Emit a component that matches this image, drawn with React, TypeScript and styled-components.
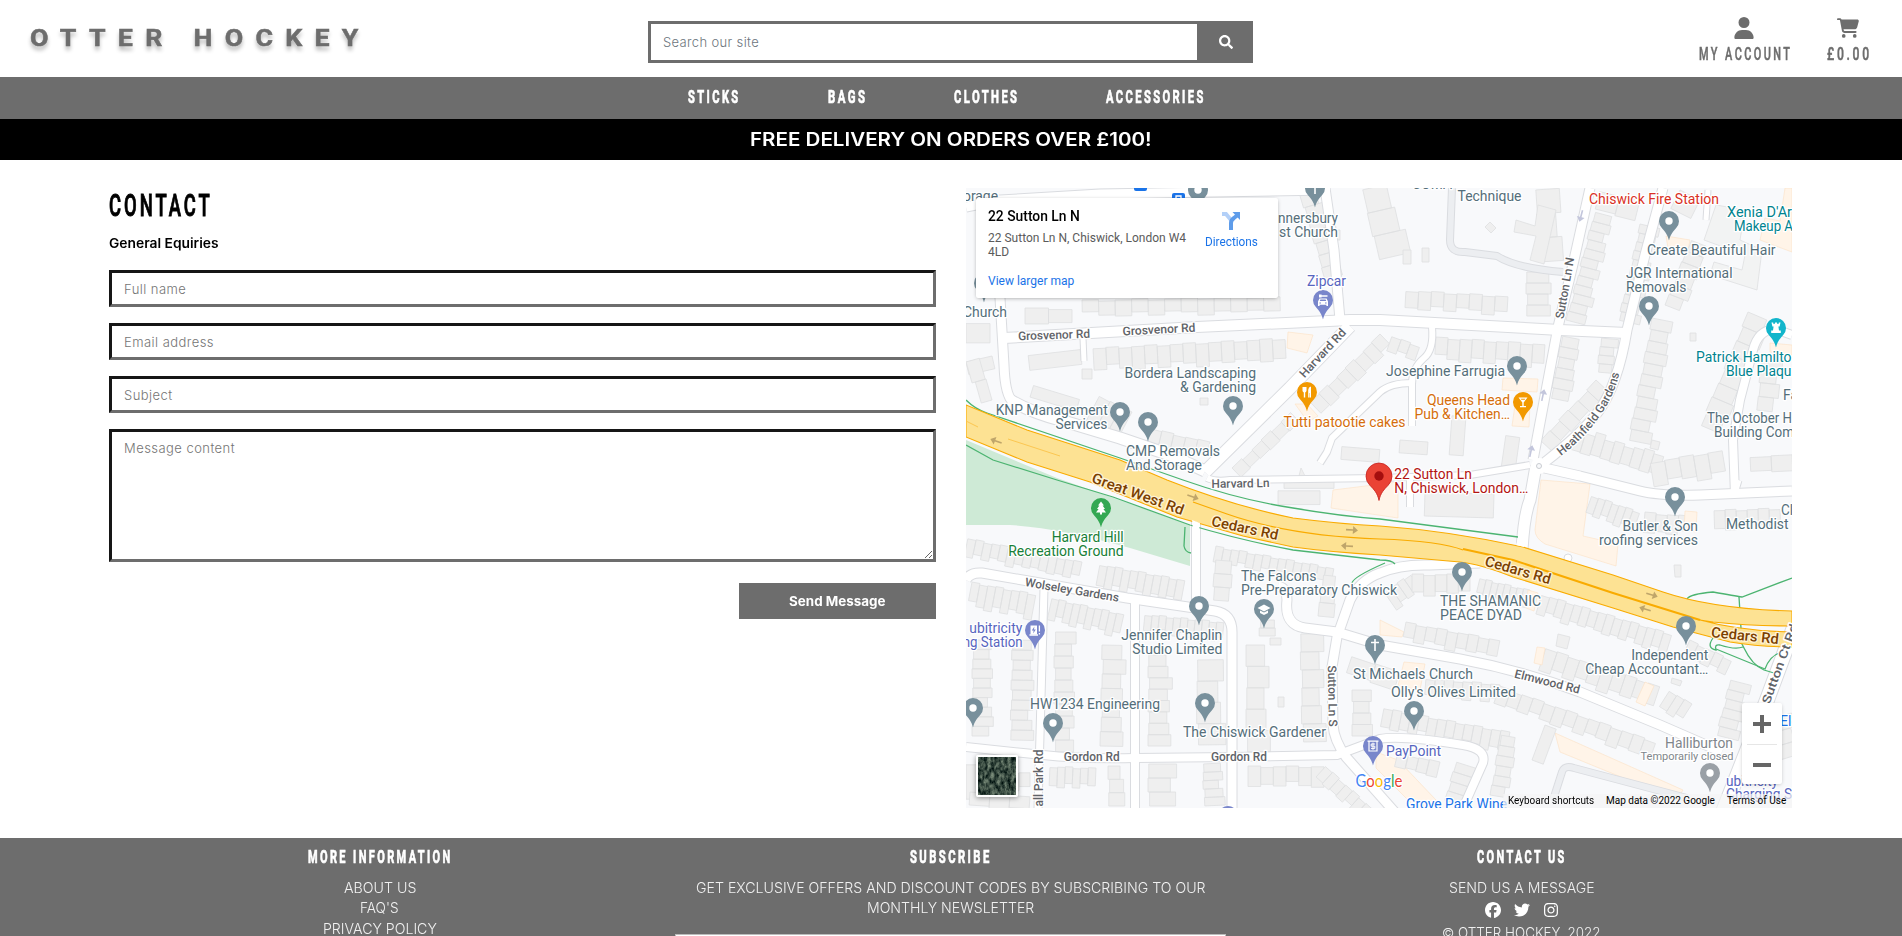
import React, { useLayoutEffect, useRef, useState } from 'react';
import styled, { createGlobalStyle, css } from 'styled-components';
import { FaUser, FaCartShopping, FaFacebook, FaTwitter, FaInstagram } from 'react-icons/fa6';
import { FaSearch } from 'react-icons/fa';

const GREY = '#6d6d6d';

const Global = createGlobalStyle`
  *, *::before, *::after { box-sizing: border-box; }
  html, body { margin: 0; height: 100%; overflow: hidden; background: #fff; }
  body { font-family: Inter, 'Open Sans', sans-serif; color: #000; }
  a { color: inherit; text-decoration: none; }
`;

/* ---------- text that is set to an exact measure ---------- */

const Measure = styled.span<{ $w: number }>`
  display: inline-block;
  width: ${p => p.$w}px;
  text-align: left;
  vertical-align: top;
  white-space: nowrap;
`;
const Stretch = styled.span<{ $ls: number }>`
  display: inline-block;
  transform-origin: 0 50%;
  letter-spacing: ${p => p.$ls}px;
  margin-right: -400px;
`;

function Fit({ w, ls = 0, children }: { w: number; ls?: number; children: string }) {
  const ref = useRef<HTMLSpanElement>(null);
  const [scale, setScale] = useState(1);
  useLayoutEffect(() => {
    if (ref.current) setScale(w / (ref.current.offsetWidth - ls));
  }, [w, ls]);
  return (
    <Measure $w={w}>
      <Stretch ref={ref} $ls={ls} style={{ transform: `scaleX(${scale})` }}>{children}</Stretch>
    </Measure>
  );
}

/* ---------- header ---------- */

const Page = styled.div`
  height: 936px;
  overflow: hidden;
  display: flex;
  flex-direction: column;
`;
const Header = styled.header`
  height: 77px;
  flex: none;
  display: grid;
  grid-template-columns: 648px 605px 1fr;
`;
const Brand = styled.a`
  padding: 23px 0 0 30px;
  font: 700 24px/31px Roboto, sans-serif;
  color: ${GREY};
  -webkit-text-stroke: 0.5px ${GREY};
  text-shadow: 0 4px 4px rgba(0, 0, 0, 0.3);
`;
const Search = styled.form`
  margin-top: 21px;
  height: 42px;
  display: flex;
  border: 3px solid ${GREY};
  background: ${GREY};
`;
const SearchInput = styled.input`
  flex: none;
  width: 546px;
  border: 0;
  outline: 0;
  padding: 0 12px;
  font: 300 13px Inter, sans-serif;
  &::placeholder { color: #6c757d; opacity: 1; letter-spacing: 0.35px; }
`;
const SearchButton = styled.button`
  flex: 1;
  border: 0;
  padding: 0 0 1px 5px;
  background: ${GREY};
  color: #fff;
  font-size: 14px;
  display: flex;
  align-items: center;
  justify-content: center;
`;
const Account = styled.div`
  display: flex;
  justify-content: flex-end;
  gap: 37px;
  padding: 17px 33px 0 0;
`;
const AccountLink = styled.a`
  display: flex;
  flex-direction: column;
  align-items: center;
  color: ${GREY};
  font: 500 18px/22px Roboto, sans-serif;
  -webkit-text-stroke: 0.5px ${GREY};
  svg { width: auto; height: 22px; margin: 0 1px 4px 0; }
`;

const Nav = styled.nav`
  height: 42px;
  flex: none;
  background: ${GREY};
  display: flex;
  gap: 89px;
  padding: 9px 0 0 688px;
  color: #fff;
  font: 700 18.5px/22px Roboto, sans-serif;
  -webkit-text-stroke: 0.7px #fff;
`;
const Banner = styled.div`
  height: 41px;
  flex: none;
  background: #000;
  color: #fff;
  text-align: center;
  font: 600 18px/41px Inter, sans-serif;
`;

/* ---------- contact form ---------- */

const Main = styled.main`
  flex: none;
  height: 678px;
  display: grid;
  grid-template-columns: 827px 826px;
  column-gap: 30px;
  padding: 28px 0 0 109px;
`;
const Title = styled.h1`
  margin: 0;
  font: 500 31px/36px Roboto, sans-serif;
  -webkit-text-stroke: 1px #000;
`;
const Subtitle = styled.h2`
  margin: 9px 0 16px;
  font: 600 13px/21px Inter, sans-serif;
`;
const field = css`
  display: block;
  width: 100%;
  border: 3px solid;
  border-color: #161616 ${GREY} ${GREY} #161616;
  outline: 0;
  background: #fff;
  font: 300 13px/20px Inter, sans-serif;
  &::placeholder { color: #757575; opacity: 1; letter-spacing: 0.45px; }
`;
const Field = styled.input`
  ${field}
  height: 37px;
  padding: 0 12px;
  margin-bottom: 16px;
`;
const Area = styled.textarea`
  ${field}
  height: 133px;
  padding: 6px 12px;
  resize: vertical;
`;
const Actions = styled.div`
  display: flex;
  justify-content: flex-end;
  margin-top: 21px;
`;
const Send = styled.button`
  width: 197px;
  height: 36px;
  border: 0;
  padding: 0;
  background: ${GREY};
  color: #fff;
  font: 700 13px/34px Inter, sans-serif;
`;

/* ---------- map ---------- */

const MapFrame = styled.div`
  position: relative;
  height: 620px;
  overflow: hidden;
  background: #f8f9fb;
  font-family: Roboto, sans-serif;
  > svg { display: block; }
`;
const Card = styled.div`
  position: absolute;
  left: 10px;
  top: 10px;
  width: 302px;
  height: 100px;
  display: flex;
  background: #fff;
  border-radius: 2px;
  box-shadow: 0 1px 4px -1px rgba(0, 0, 0, 0.4);
  padding: 9px 12px;
`;
const Place = styled.div`
  width: 207px;
  font-size: 12px;
  line-height: 14px;
  color: #5b5b5b;
  strong { display: block; font-weight: 500; font-size: 14px; line-height: 18px; color: #000; margin-bottom: 6px; }
  a { display: block; color: #1a73e8; margin-top: 15px; }
`;
const Directions = styled.a`
  flex: 1;
  margin: 4px 0 0 1px;
  display: flex;
  flex-direction: column;
  align-items: center;
  color: #1a73e8;
  font-size: 12px;
  line-height: 14px;
  svg { margin-bottom: 4px; }
`;
const Zoom = styled.div`
  position: absolute;
  left: 776px;
  top: 515px;
  width: 40px;
  height: 81px;
  padding: 0 5px;
  background: #fff;
  border-radius: 2px;
  box-shadow: 0 1px 4px -1px rgba(0, 0, 0, 0.3);
`;
const ZoomButton = styled.button`
  display: grid;
  place-items: center;
  width: 30px;
  height: 41px;
  border: 0;
  padding: 0;
  background: none;
  & + & { height: 40px; border-top: 1px solid #e6e6e6; }
`;
const Thumb = styled.div`
  position: absolute;
  left: 10px;
  top: 567px;
  width: 42px;
  height: 42px;
  border: 2px solid #fff;
  border-radius: 2px;
  box-shadow: 0 1px 5px rgba(0, 0, 0, 0.4);
  overflow: hidden;
  svg { display: block; }
`;
const Legal = styled.div`
  position: absolute;
  right: 0;
  bottom: 0;
  height: 14px;
  display: flex;
  gap: 12px;
  padding: 0 6px 0 5px;
  background: rgba(245, 245, 245, 0.7);
  font-size: 10px;
  line-height: 14px;
  color: #000;
`;

type Road = [string, number];
const roads: Road[] = [
  ['M966 207 L1000 200 L1100 194 L1330 190', 9],
  ['M998 200 L1000 298 L1004 365 Q1005 395 1013 402', 9],
  ['M1004 338 L1197 327 L1350 320 L1380 320 L1560 330 L1627 333', 10],
  ['M1010 400 Q1030 412 1060 420 L1120 438 L1170 455 L1205 471', 11],
  ['M1205 472 L1290 388 L1350 326', 12],
  ['M1083 338 L1084 361', 5],
  ['M1325 188 L1334 250 L1340 320', 9],
  ['M1432 327 Q1434 350 1424 358 Q1412 368 1412 384 L1412 426', 6],
  ['M1412 383 Q1390 383 1380 392 L1332 438 L1327 452 L1320 463', 6],
  ['M1207 478 Q1215 482 1230 480 L1380 478 L1470 475 L1530 465', 6],
  ['M1590 188 L1574 260 L1558 327 L1533 460', 9],
  ['M1663 188 L1645 255 L1627 330 Q1618 385 1598 412 Q1580 435 1545 462', 9],
  ['M1536 466 L1530 500 Q1524 515 1522 550', 11],
  ['M1540 467 L1580 476 L1640 491 Q1660 496 1700 495 L1792 491', 9],
  ['M1735 495 L1733 440 L1740 400 L1753 350 Q1758 330 1775 329 L1792 335', 8],
  ['M1708 190 L1706 220', 5],
  ['M1410 478 L1410 507', 6],
  ['M1738 480 L1735 490', 7],
  ['M1196 518 L1196 606', 8],
  ['M966 580 Q970 572 982 573 L1127 598 L1215 611 Q1232 614 1232 632 L1232 808', 9],
  ['M1044 588 L1038 808', 7],
  ['M1135 603 L1135 808', 8],
  ['M966 747 L1043 755 Q1080 759 1135 758 L1233 757 L1337 755 L1380 739 Q1400 735 1463 745 Q1487 749 1483 763 L1463 808', 8],
  ['M1400 818 L1346 757 Q1334 740 1333 725 L1332 667 L1337 637 L1350 600 Q1360 580 1380 573 Q1400 564 1430 565 L1480 563', 9],
  ['M1278 586 Q1287 588 1287 600 Q1284 625 1305 628 L1337 632 L1380 645 L1460 659 Q1520 670 1580 692 L1660 725 L1722 752', 9],
  ['M1796 622 L1767 700 L1723 812', 14],
];
const greyRoads = [
  'M1452 188 L1450 240 Q1450 253 1465 252 L1497 256 Q1515 268 1563 272',
  'M1553 800 L1562 772 Q1564 765 1574 768 L1687 798',
];

/* A terrace: n plots from (x1,y1) to (x2,y2), each about d deep, to one side of the line. */
type Terrace = [number, number, number, number, number, number];
const terraces: Terrace[] = [
  [1082, 300, 1280, 296, 12, 14], [1093, 348, 1285, 338, 15, 20], [1028, 354, 1080, 348, 1, 16],
  [1025, 308, 1072, 308, 2, 14], [1150, 428, 1210, 442, 5, 16], [1034, 384, 1080, 398, 1, 14],
  [1232, 468, 1290, 412, 6, 12], [1310, 402, 1380, 334, 8, 16], [1100, 395, 1132, 412, 3, 26],
  [1300, 196, 1325, 280, 7, -16], [1362, 190, 1378, 260, 3, -28],
  [966, 322, 990, 322, 1, 18], [966, 362, 992, 356, 1, 14], [980, 358, 992, 400, 2, 12],
  [1406, 290, 1508, 296, 8, 16], [1436, 337, 1545, 344, 9, 20], [1392, 336, 1420, 346, 3, 14],
  [1594, 212, 1566, 320, 12, -18], [1640, 224, 1618, 320, 11, -18], [1526, 272, 1526, 316, 4, -22],
  [1690, 240, 1665, 305, 6, -18], [1652, 318, 1628, 440, 11, -20], [1562, 336, 1550, 398, 6, -18],
  [1600, 338, 1597, 372, 4, -15], [1596, 380, 1540, 440, 6, -16], [1570, 450, 1658, 476, 9, -20],
  [1650, 462, 1722, 450, 5, 22], [1748, 312, 1700, 425, 8, -22], [1762, 355, 1756, 410, 4, -18],
  [1600, 190, 1640, 200, 2, 18], [1680, 190, 1700, 200, 1, 24], [1535, 190, 1540, 262, 3, -22],
  [1592, 495, 1640, 512, 7, 18], [1645, 512, 1690, 516, 4, 18], [1714, 510, 1780, 508, 6, 18],
  [1750, 456, 1792, 454, 2, 16], [1400, 440, 1428, 442, 1, 12], [1452, 415, 1466, 416, 1, 42],
  [1506, 434, 1520, 436, 1, 28], [1425, 492, 1494, 494, 1, 24], [1278, 490, 1320, 490, 1, 16],
  [1342, 445, 1380, 448, 1, 12], [1284, 480, 1334, 480, 1, 9],
  [968, 538, 1082, 562, 14, 16], [1100, 564, 1185, 580, 11, 20], [972, 582, 1036, 594, 8, 22],
  [1052, 598, 1124, 614, 10, 20], [1145, 614, 1224, 622, 11, 16], [1216, 546, 1334, 568, 15, 14],
  [1215, 560, 1212, 600, 3, -16], [1322, 575, 1318, 616, 3, -14],
  [972, 640, 972, 736, 10, -18], [1012, 640, 1010, 740, 10, -20], [1054, 632, 1054, 752, 10, -18],
  [1102, 645, 1100, 746, 7, -20], [1148, 655, 1148, 746, 8, -20], [1196, 660, 1197, 745, 4, -24],
  [1246, 645, 1246, 752, 5, -20], [1300, 634, 1302, 742, 6, -20], [1050, 766, 1096, 768, 6, 18],
  [1108, 766, 1108, 806, 3, -14], [1148, 764, 1148, 806, 3, -26], [1202, 764, 1204, 806, 5, -18],
  [1248, 766, 1324, 766, 6, 18], [1326, 766, 1380, 815, 8, 14], [1276, 620, 1276, 636, 2, 16],
  [1352, 690, 1352, 736, 4, -18], [1352, 656, 1400, 672, 2, 18],
  [1384, 592, 1410, 574, 4, 18], [1412, 574, 1470, 574, 5, 18], [1480, 578, 1530, 590, 8, 16],
  [1542, 594, 1672, 634, 16, 18], [1406, 622, 1500, 640, 9, 16], [1546, 648, 1660, 686, 10, 20],
  [1670, 690, 1692, 704, 3, 18], [1690, 640, 1732, 660, 5, 14], [1730, 680, 1716, 735, 6, -20],
  [1426, 678, 1500, 684, 8, 16], [1500, 686, 1656, 742, 14, 16], [1384, 708, 1510, 732, 14, 18],
  [1500, 735, 1490, 795, 6, -16], [1398, 752, 1440, 762, 4, 14], [1456, 762, 1444, 800, 4, -22],
  [1768, 720, 1780, 760, 3, -20], [1545, 725, 1532, 760, 1, -12],
  [966, 764, 980, 764, 1, 40], [1008, 772, 1030, 772, 2, 16], [970, 792, 1030, 796, 3, 14],
];

function plots([x1, y1, x2, y2, n, d]: Terrace, k: number) {
  const len = Math.hypot(x2 - x1, y2 - y1) || 1;
  const ux = (x2 - x1) / n, uy = (y2 - y1) / n;
  const nx = -(y2 - y1) / len, ny = (x2 - x1) / len;
  return Array.from({ length: n }, (_, i) => {
    const depth = d * (1 + (((i * 7 + k * 3) % 5) - 2) * 0.07);
    const off = ((i * 5 + k) % 3) * (d > 0 ? 0.8 : -0.8);
    const ax = x1 + ux * i + nx * off, ay = y1 + uy * i + ny * off;
    return `M${ax} ${ay} l${ux} ${uy} l${nx * depth} ${ny * depth} l${-ux} ${-uy}z`;
  }).join('');
}

const SLATE = '#546e7a';
const INDIGO = '#5765c0';
const TEAL = '#00838f';
const ORANGE = '#d56e0c';

/* x, baseline, width, text, colour, anchor, size */
type Label = [number, number, number, string, string?, ('start' | 'end' | 'middle')?, number?];
const labels: Label[] = [
  [998, 201, 35, 'orage', SLATE, 'end'],
  [1007, 317, 44, 'Church', SLATE, 'end'],
  [1338, 223, 60, 'nnersbury', SLATE, 'end'],
  [1338, 237, 59, 'st Church', SLATE, 'end'],
  [1412, 189, 40, 'COMA', SLATE],
  [1107.7, 415, 112, 'KNP Management', SLATE, 'end'],
  [1107.5, 429, 52, 'Services', SLATE, 'end'],
  [1126, 456, 94, 'CMP Removals'],
  [1126, 470, 76, 'And Storage'],
  [1256, 378, 131.5, 'Bordera Landscaping', SLATE, 'end'],
  [1256, 392, 76, '& Gardening', SLATE, 'end'],
  [1307, 286, 39, 'Zipcar', INDIGO],
  [1283.5, 427, 122, 'Tutti patootie cakes', ORANGE],
  [1457.5, 201, 64, 'Technique'],
  [1589, 204, 130, 'Chiswick Fire Station', '#d93025'],
  [1727, 217, 65, "Xenia D'Ar", TEAL],
  [1734, 231, 59, 'Makeup A', TEAL],
  [1647, 255, 128.5, 'Create Beautiful Hair'],
  [1626, 278, 106.5, 'JGR International'],
  [1626, 292, 60.5, 'Removals'],
  [1386, 376, 119, 'Josephine Farrugia'],
  [1510, 405, 83, 'Queens Head', ORANGE, 'end'],
  [1510, 419, 95.5, 'Pub & Kitchen…', ORANGE, 'end'],
  [1696, 362, 95.5, 'Patrick Hamilto', TEAL],
  [1726, 376, 65.5, 'Blue Plaqu', TEAL],
  [1783, 400, 15, 'Fa'],
  [1707, 423, 85, 'The October H'],
  [1714, 437, 80, 'Building Com'],
  [1394.3, 479, 77.5, '22 Sutton Ln', '#b31412'],
  [1394.3, 493, 134, 'N, Chiswick, London…', '#b31412'],
  [1123.7, 542, 72, 'Harvard Hill', '#188038', 'end'],
  [1123.7, 556, 115.5, 'Recreation Ground', '#188038', 'end'],
  [1241, 581, 75.5, 'The Falcons'],
  [1241, 595, 156, 'Pre-Preparatory Chiswick'],
  [1022.3, 633, 53, 'ubitricity', INDIGO, 'end'],
  [1022.7, 647, 60, 'ng Station', INDIGO, 'end'],
  [1222.3, 640, 101, 'Jennifer Chaplin', SLATE, 'end'],
  [1222.3, 654, 90, 'Studio Limited', SLATE, 'end'],
  [1030, 709, 130, 'HW1234 Engineering'],
  [1183, 737, 143, 'The Chiswick Gardener'],
  [1353, 679, 120, 'St Michaels Church'],
  [1391, 697, 125, "Olly's Olives Limited"],
  [1698, 531, 75.5, 'Butler & Son', SLATE, 'end'],
  [1698, 545, 99, 'roofing services', SLATE, 'end'],
  [1781, 515, 12, 'Cl'],
  [1726, 529, 62.5, 'Methodist'],
  [1440, 606, 101, 'THE SHAMANIC'],
  [1440, 620, 82, 'PEACE DYAD'],
  [1708.3, 660, 77, 'Independent', SLATE, 'end'],
  [1708.3, 674, 123, 'Cheap Accountant…', SLATE, 'end'],
  [1386, 756, 55, 'PayPoint', INDIGO],
  [1733, 748, 68, 'Halliburton', '#80868b', 'end'],
  [1733.5, 760, 93, 'Temporarily closed', '#80868b', 'end', 11.5],
  [1780, 726, 19, 'Ele', '#1a73e8'],
  [1726, 786, 52, 'ubitricity', INDIGO],
  [1726, 799, 66, 'Charging S', INDIGO],
  [1406, 809, 101, 'Grove Park Wine', '#1a73e8'],
];

/* cx, cy, width, rotation, text, main road */
type Street = [number, number, number, number, string, boolean?];
const streets: Street[] = [
  [1054, 335, 72, -2, 'Grosvenor Rd'],
  [1159, 329.5, 73, -3, 'Grosvenor Rd'],
  [1322.7, 353, 62, -47, 'Harvard Rd'],
  [1240.5, 483.5, 58, -1, 'Harvard Ln'],
  [1565, 288, 62, -80, 'Sutton Ln N'],
  [1072, 590, 95, 9.5, 'Wolseley Gardens'],
  [1091.7, 757, 56, 0, 'Gordon Rd'],
  [1239, 757, 56, 0, 'Gordon Rd'],
  [1038.7, 778, 57, -90, 'all Park Rd'],
  [1332.3, 696, 61, 89, 'Sutton Ln S'],
  [1547.3, 681.7, 67, 14, 'Elmwood Rd'],
  [1780, 664, 84, -70, 'Sutton Ct Rd'],
  [1138, 494, 97, 20, 'Great West Rd', true],
  [1245, 528, 68, 12, 'Cedars Rd', true],
  [1518, 570, 68, 16, 'Cedars Rd', true],
  [1745, 635.5, 68, 6, 'Cedars Rd', true],
];

const PIN = 'M0 19.5 C-1.4 13.5 -4 10.6 -7 7.2 A10 10 0 1 1 7 7.2 C4 10.6 1.4 13.5 0 19.5z';
const dots: [number, number, string?][] = [
  [1120, 412], [1148, 422], [1233, 406], [1198, 190], [984, 283], [1517, 366], [1669, 221],
  [1649, 306], [1199, 606], [973, 708], [1053, 723], [1205, 703], [1675, 497], [1462, 572],
  [1686, 626], [1414, 711], [1710, 773, '#9aa0a6'],
];

function Pin({ x, y, fill = '#78909c', children }: { x: number; y: number; fill?: string; children?: React.ReactNode }) {
  return (
    <g transform={`translate(${x} ${y})`}>
      <path d={PIN} fill={fill} />
      {children ?? <circle r="3.7" fill="#fff" />}
    </g>
  );
}

const arrows: [number, number, number, string][] = [
  [996, 441, 200, '#bfa56a'], [1193, 497, 20, '#bfa56a'], [1352, 530, 4, '#bfa56a'],
  [1347, 546, 184, '#bfa56a'], [1652, 595, 18, '#bfa56a'], [1645, 609, 198, '#bfa56a'],
  [1581, 216, 105, '#c3c6dc'], [1543, 395, -78, '#c3c6dc'], [1531, 451, -78, '#c3c6dc'],
];

const greens = [
  'M966 400 Q975 409 987 413 L1120 458 L1183 480 Q1240 500 1293 508 Q1340 516 1380 519 L1518 537',
  'M966 445 L993 460 L1057 480 L1113 497 L1190 525 Q1240 540 1293 550 L1380 560 Q1392 560 1395 564',
  'M1185 527 L1184 546 Q1185 552 1191 553',
  'M1352 583 Q1353 577 1385 563',
  'M1687 599 Q1690 594 1713 592 Q1735 596 1742 597 L1792 578',
  'M1739 597 L1742 644 L1744 648 Q1752 665 1764 670 L1774 673',
  'M1713 638 Q1706 648 1716 650 Q1714 644 1720 645 Q1735 650 1743 647',
  'M1716 649 L1765 669 Q1770 655 1782 652',
];

const A4_TOP = 'M966 405 L1027 430 L1120 460 L1167 480 Q1230 505 1293 518 Q1340 524 1380 526 Q1450 531 1523 547 L1613 575 L1663 592 Q1713 609 1792 611';
const A4_BODY = `${A4_TOP} L1792 626 Q1750 626 1713 622 L1700 620 Q1740 631 1792 632 L1792 647 Q1760 647 1730 642 L1673 627 L1613 608 L1513 577 Q1480 564 1460 562 L1380 555 Q1330 552 1293 547 L1243 536 L1177 517 L1090 482 L1027 462 L966 437z`;

function MapDrawing() {
  return (
    <svg width="826" height="620" viewBox="966 188 826 620">
      <g fill="#fff4e8" stroke="#fce0c4" strokeWidth=".6">
        <path d="M1288 332 L1313 335 L1307 353 L1287 348z" />
        <path d="M1541 480 L1590 484 L1583 536 L1618 544 L1616 566 L1545 544 Q1535 538 1535 530z" />
        <path d="M1333 490 L1398 482 L1398 518 L1331 508z" />
        <path d="M1503 378 L1538 379 L1537 392 L1502 390z M1515 405 L1530 403 L1529 427 L1512 426z" />
        <path d="M1555 733 L1683 790 L1677 800 L1560 752z" />
        <path d="M1785 188 L1792 188 L1792 252 L1760 240 L1765 218 L1780 221z" />
        <path d="M1666 236 L1690 240 L1688 250 L1668 248z M1770 343 L1792 345 V355 L1770 352z" />
        <path d="M1380 620 L1404 632 L1402 637 L1380 635z M1404 662 L1425 664 L1420 690 L1398 686z" />
        <path d="M1376 752 L1398 760 L1436 800 L1420 812 L1376 768z" />
      </g>
      <path d="M966 440 L1057 478 L1190 525 L1190 566 L1130 548 Q1060 528 1010 525 L966 525z" fill="#ceead6" />
      <g fill="#efefef" stroke="#dedfe1" strokeWidth=".8">
        {terraces.map((t, k) => <path key={k} d={plots(t, k)} />)}
        <path d="M1330 230 h10 v10 h-10z M1403 250 h8 v14 h-8z M1422 248 h7 v14 h-7z M1490 222 l6 6 l-5 5 l-6 -6z" />
        <path d="M1516 220 L1535 226 L1538 205 L1556 210 L1544 264 L1530 260 L1536 236 L1514 232z" />
        <path d="M1082 369 h10 v10 h-10z M1200 398 h8 v7 h-8z M1298 480 l3 -12 l4 8z M1270 638 h11 v7 h-11z M1278 697 h6 v10 h-6z" />
        <path d="M1558 634 l12 3 l-3 12 l-11 -3z M1674 565 h7 v12 h-6z M1672 678 l10 3 l-2 5 l-9 -3z M1690 333 h6 v8 h-6z M1652 440 l8 2 l-2 8 l-8 -2z" />
        <path d="M1716 205 L1745 210 L1740 240 L1762 250 L1757 290 L1710 275 L1714 262 L1742 270 L1745 255 L1704 240z" fillOpacity=".6" />
      </g>
      <g fill="#fff4e8" stroke="#fce0c4" strokeWidth=".6">
        <path d="M1537 647 L1545 648 L1542 665 L1534 663z M1645 682 L1654 686 L1645 706 L1636 702z" />
        <path d="M1685 511 L1697 512 L1696 532 L1684 530z M1295 404 L1307 404 L1318 416 L1308 422z M1528 590 L1538 593 L1534 611 L1526 608z" />
      </g>
      <g fill="none" stroke="#dadce0" strokeLinejoin="round">
        {greyRoads.map(d => <path key={d} d={d} strokeWidth="8" />)}
        {roads.map(([d, w]) => <path key={d} d={d} strokeWidth={w + 2} />)}
      </g>
      <g fill="none" stroke="#fff" strokeLinejoin="round">
        {greyRoads.map(d => <path key={d} d={d} strokeWidth="6" stroke="#eceef1" />)}
        {roads.map(([d, w]) => <path key={d} d={d} strokeWidth={w} />)}
      </g>
      <circle cx="1539" cy="466" r="8" fill="#fff" />
      <circle cx="1539" cy="466" r="2.5" fill="#f8f9fb" stroke="#c9ccd1" />
      <circle cx="1568" cy="558" r="4" fill="#fff" stroke="#dadce0" />
      <g fill="none" stroke="#4cb471" strokeWidth="1.3">{greens.map(d => <path key={d} d={d} />)}</g>
      <path d={A4_BODY} fill="#fde293" stroke="#f9ab00" strokeWidth="1.1" />
      <path d="M1193 502 L1227 514 Q1290 536 1380 539 Q1440 541 1463 550" fill="none" stroke="#f9ab00" strokeWidth="1.1" />
      <path d="M1463 549 L1513 560 L1613 593 L1700 620" fill="none" stroke="#f9ab00" strokeWidth="2" />
      <path d="M966 421 L978 427 M1008 439 L1060 456" stroke="#fbc34a" strokeWidth=".9" />
      <path d="M1516 545 L1524 547 L1527 540 L1518 538z M1192 520 L1200 523 L1199 530 L1193 528z" fill="#fff" />
      {arrows.map(([x, y, r, c]) => (
        <path key={`${x}-${y}`} transform={`translate(${x} ${y}) rotate(${r})`} d="M-6 -.8 H1 V-4 L6 0 L1 4 V.8 H-6z" fill={c} />
      ))}

      <g fontFamily="Roboto" fontSize="12" fontWeight="500" fill="#5f6368" stroke="#fff" strokeWidth="2.6" strokeLinejoin="round" paintOrder="stroke" textAnchor="middle">
        {streets.map(([x, y, w, r, s, main], i) => (
          <text key={i} transform={`translate(${x} ${y}) rotate(${r})`} y={main ? 5 : 4} textLength={w} lengthAdjust="spacingAndGlyphs"
            fontSize={main ? 14.5 : 12} fill={main ? '#7b3f00' : '#5f6368'} stroke={main ? '#fff3d6' : '#fff'}>{s}</text>
        ))}
        <path id="heathfield" d="M1561 456 Q1610 418 1620 371" fill="none" stroke="none" />
        <text textAnchor="start" textLength="103" lengthAdjust="spacingAndGlyphs"><textPath href="#heathfield">Heathfield Gardens</textPath></text>
      </g>

      {dots.map(([x, y, c]) => <Pin key={`${x}-${y}`} x={x} y={y} fill={c} />)}
      <Pin x={1315} y={188}><path d="M0 -6 V6 M-4 -2 H4" stroke="#fff" strokeWidth="1.6" /></Pin>
      <Pin x={1375} y={645}><path d="M0 -6 V6 M-4 -2.5 H4" stroke="#fff" strokeWidth="1.6" /></Pin>
      <Pin x={1264} y={609}><path d="M-6.5 -1 L0 -4.5 L6.5 -1 L0 2.5z M-4 1.5 L0 3.6 L4 1.5 V4 L0 6 L-4 4z" fill="#fff" /></Pin>
      <Pin x={1101} y={508} fill="#34a853"><path d="M0 -6.5 L3 -2.5 H1.6 L4 1 H2.4 L5 4.4 H1 V6.5 H-1 V4.4 H-5 L-2.4 1 H-4 L-1.6 -2.5 H-3z" fill="#fff" /></Pin>
      <Pin x={1323} y={300} fill="#7986cb">
        <path d="M-5 1.5 L-3.6 -1.6 H3.6 L5 1.5 V6 H3.4 V4.8 H-3.4 V6 H-5z M-4 -5.5 h2.6 v.8 H4.5 v1.4 H-1.4 v.8 H-4z" fill="#fff" />
        <path d="M-3.2 1 L-2.6 -.4 H2.6 L3.2 1z M-3.6 2.4 h1.6 v1.2 h-1.6z M2 2.4 h1.6 v1.2 h-1.6z" fill="#7986cb" />
      </Pin>
      <Pin x={1307} y={392} fill="#f29900"><path d="M-4.5 -5 H-.5 V-1 Q-.8 0 -1.8 .4 V5.5 H-3.2 V.4 Q-4.2 0 -4.5 -1z M1.2 5.5 V-2 Q1.5 -5 4 -5.4 V5.5 H2.8 V1 H2.4 V5.5z" fill="#fff" /></Pin>
      <Pin x={1523} y={402} fill="#f29900"><path d="M-4.5 -4.5 H4.5 L.7 .5 V4 H3 V5.2 H-3 V4 H-.7 V.5z M-2.4 -3.3 L-1.6 -2.2 H1.6 L2.4 -3.3z" fill="#fff" fillRule="evenodd" /></Pin>
      <Pin x={1776} y={328} fill="#12b5cb"><path d="M-4.5 -5.5 H-2.8 V-4.2 H-1 V-5.5 H1 V-4.2 H2.8 V-5.5 H4.5 L3.6 -1.6 H2.4 L3 2.6 H4.8 V5 H-4.8 V2.6 H-3 L-2.4 -1.6 H-3.6z" fill="#fff" /></Pin>
      <Pin x={1035} y={630} fill="#7986cb"><path d="M-4.5 -4.500 H2 V4.5 H-4.5z" fill="#fff" /><path d="M-.6 -3.6 L-3.2 .6 H-1.4 L-1.8 3.6 L.8 -.6 H-1z" fill="#7986cb" /><path d="M-5.5 5 H3 M4.4 -4.5 V1.6 M4.4 3 V4.6" fill="none" stroke="#fff" strokeWidth="1.3" /></Pin>
      <Pin x={1373} y={746} fill="#7986cb"><path d="M-5.5 -4.8 H5.5 M-4 -4.5 V5 H4 V-4.5" fill="none" stroke="#fff" strokeWidth="1.2" /><path d="M2 -2 H-1.8 V.2 H1.8 V2.4 H-2 M0 -3.4 V3.8" fill="none" stroke="#fff" strokeWidth="1" /></Pin>
      <Pin x={1228} y={816} fill="#7986cb" />
      <rect x="1134" y="183" width="13" height="8" rx="2" fill="#1a73e8" />
      <rect x="1172" y="193" width="13" height="8" rx="2" fill="#1a73e8" /><path d="M1176 198 v-2 h5 v2" stroke="#fff" strokeWidth="1.3" fill="none" />
      <g transform="translate(1379 476)">
        <path d="M0 24.5 C-1.5 17 -5 13.6 -9 9.4 A13 13 0 1 1 9 9.4 C5 13.6 1.5 17 0 24.5z" fill="#ea4335" stroke="#c5221f" strokeWidth=".8" />
        <circle r="4.7" fill="#a50e0e" />
      </g>

      <g fontFamily="Roboto" stroke="#fff" strokeWidth="2.6" strokeLinejoin="round" paintOrder="stroke">
        {labels.map(([x, y, w, s, c = SLATE, a = 'start', size = 14], i) => (
          <text key={i} x={x} y={y} textAnchor={a} textLength={w} lengthAdjust="spacingAndGlyphs" fontSize={size} fill={c}>{s}</text>
        ))}
        <text x="1355.5" y="787" fontFamily="Lato" fontSize="17.5" textLength="47" lengthAdjust="spacingAndGlyphs" fontWeight="400">
          <tspan fill="#4285f4">G</tspan><tspan fill="#ea4335">o</tspan><tspan fill="#fbbc04">o</tspan>
          <tspan fill="#4285f4">g</tspan><tspan fill="#34a853">l</tspan><tspan fill="#ea4335">e</tspan>
        </text>
      </g>
    </svg>
  );
}

function ContactMap() {
  return (
    <MapFrame>
      <MapDrawing />
      <Card>
        <Place>
          <strong><Fit w={92}>22 Sutton Ln N</Fit></strong>
          <Fit w={198}>22 Sutton Ln N, Chiswick, London W4</Fit><br />4LD
          <a href="#map"><Fit w={86}>View larger map</Fit></a>
        </Place>
        <Directions href="#directions">
          <svg width="20" height="20" viewBox="0 0 20 20">
            <path d="M1 3 L5 3 L10 9" fill="none" stroke="#b3d0f8" strokeWidth="4" />
            <path d="M10 19 V12 Q10 9 13 7 L16 4.500" fill="none" stroke="#5e9cea" strokeWidth="4" />
            <path d="M11.500 1 H19 V9z" fill="#5e9cea" />
          </svg>
          <Fit w={53}>Directions</Fit>
        </Directions>
      </Card>
      <Thumb>
        <svg width="38" height="38">
          <filter id="trees" x="0" y="0" width="100%" height="100%" colorInterpolationFilters="sRGB">
            <feTurbulence type="fractalNoise" baseFrequency="0.3 0.18" numOctaves="4" seed="4" />
            <feColorMatrix values="0.8 0 0 0 -0.17  0.8 0 0 0 -0.1  0.7 0 0 0 -0.09  0 0 0 0 1" />
          </filter>
          <rect width="38" height="38" fill="#3d4d43" filter="url(#trees)" />
        </svg>
      </Thumb>
      <Zoom>
        <ZoomButton aria-label="Zoom in"><svg width="18" height="18"><path d="M9 0 V18 M0 9 H18" stroke="#666" strokeWidth="4" /></svg></ZoomButton>
        <ZoomButton aria-label="Zoom out"><svg width="18" height="4"><path d="M0 2 H18" stroke="#666" strokeWidth="4" /></svg></ZoomButton>
      </Zoom>
      <Legal>
        <Fit w={86.5}>Keyboard shortcuts</Fit>
        <Fit w={109}>Map data ©2022 Google</Fit>
        <Fit w={59}>Terms of Use</Fit>
      </Legal>
    </MapFrame>
  );
}

/* ---------- footer ---------- */

const Footer = styled.footer`
  flex: none;
  height: 98px;
  overflow: hidden;
  background: ${GREY};
  color: #fff;
  display: grid;
  grid-template-columns: 571px 571px 571px;
  padding: 0 0 0 94px;
`;
const Column = styled.div`
  display: flex;
  flex-direction: column;
  align-items: center;
  font: 300 14px/20.4px Inter, sans-serif;
  color: #f0f0f0;
`;
const FooterTitle = styled.h3`
  margin: 9px 2px 10px 0;
  font: 700 18.5px/21px Roboto, sans-serif;
  -webkit-text-stroke: 0.7px #fff;
  color: #fff;
`;
const Social = styled.div`
  display: flex;
  gap: 13px;
  height: 25px;
  padding: 4px 0;
  font-size: 16px;
  color: #fff;
  svg { display: block; }
`;
const Newsletter = styled.input`
  flex: none;
  width: 551px;
  height: 38px;
  margin-top: 15px;
  border: 1px solid #bbb;
  background: #fff;
`;

export default function App() {
  return (
    <Page>
      <Global />
      <Header>
        <Brand href="#home"><Fit w={328} ls={11}>OTTER HOCKEY</Fit></Brand>
        <Search>
          <SearchInput placeholder="Search our site" />
          <SearchButton type="button" aria-label="Search"><FaSearch /></SearchButton>
        </Search>
        <Account>
          <AccountLink href="#account"><FaUser /><Fit w={91} ls={4}>MY ACCOUNT</Fit></AccountLink>
          <AccountLink href="#bag"><FaCartShopping /><Fit w={42} ls={4}>£0.00</Fit></AccountLink>
        </Account>
      </Header>
      <Nav>
        <Fit w={50.5} ls={4}>STICKS</Fit>
        <Fit w={37} ls={4}>BAGS</Fit>
        <Fit w={63} ls={4}>CLOTHES</Fit>
        <Fit w={97} ls={4}>ACCESSORIES</Fit>
      </Nav>
      <Banner><Fit w={402}>FREE DELIVERY ON ORDERS OVER £100!</Fit></Banner>
      <Main>
        <section>
          <Title><Fit w={101} ls={5}>CONTACT</Fit></Title>
          <Subtitle><Fit w={109.5}>General Equiries</Fit></Subtitle>
          <Field placeholder="Full name" />
          <Field placeholder="Email address" />
          <Field placeholder="Subject" />
          <Area placeholder="Message content" />
          <Actions><Send type="button"><Fit w={97}>Send Message</Fit></Send></Actions>
        </section>
        <ContactMap />
      </Main>
      <Footer>
        <Column>
          <FooterTitle><Fit w={142} ls={4}>MORE INFORMATION</Fit></FooterTitle>
          <Fit w={72}>ABOUT US</Fit>
          <Fit w={39}>FAQ'S</Fit>
          <Fit w={114}>PRIVACY POLICY</Fit>
        </Column>
        <Column>
          <FooterTitle><Fit w={79} ls={4}>SUBSCRIBE</Fit></FooterTitle>
          <Fit w={510}>GET EXCLUSIVE OFFERS AND DISCOUNT CODES BY SUBSCRIBING TO OUR</Fit>
          <Fit w={167}>MONTHLY NEWSLETTER</Fit>
          <Newsletter />
        </Column>
        <Column>
          <FooterTitle><Fit w={87} ls={4}>CONTACT US</Fit></FooterTitle>
          <Fit w={146}>SEND US A MESSAGE</Fit>
          <Social><FaFacebook /><FaTwitter /><FaInstagram /></Social>
          <Fit w={159}>© OTTER HOCKEY, 2022</Fit>
        </Column>
      </Footer>
    </Page>
  );
}
